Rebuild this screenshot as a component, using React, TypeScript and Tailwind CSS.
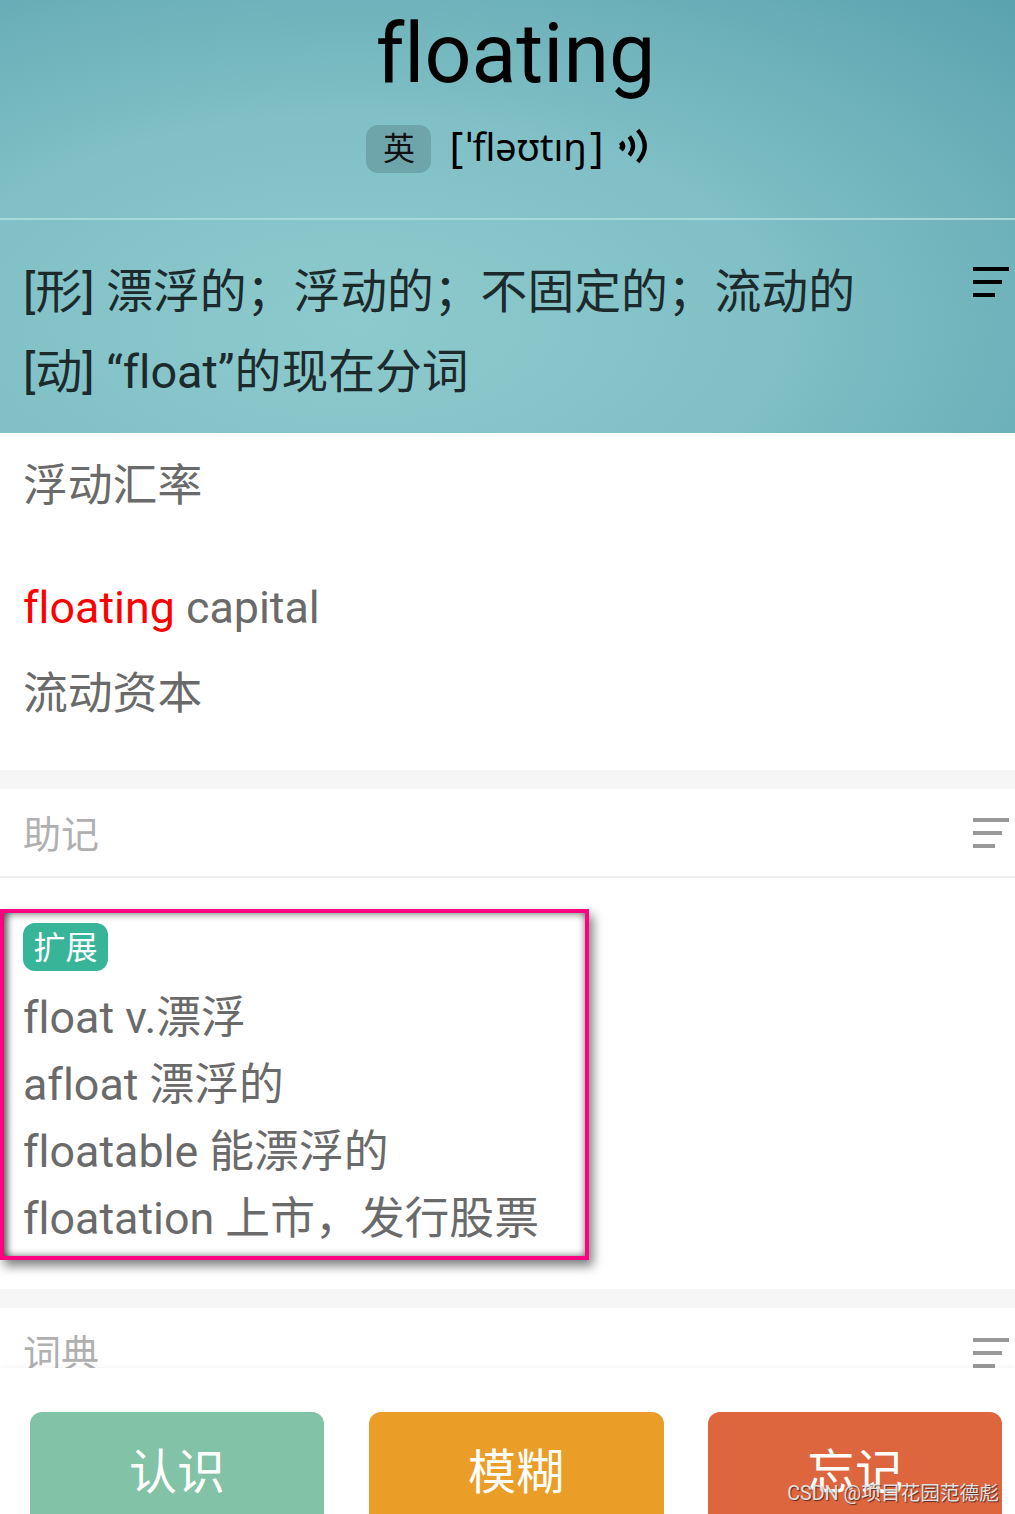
import React from "react";

function ListIcon({ className }: { className: string }) {
  return (
    <svg width="36" height="30" viewBox="0 0 36 30" className={className} fill="currentColor">
      <rect x="0" y="0" width="36" height="4" />
      <rect x="0" y="13" width="29" height="4" />
      <rect x="0" y="26" width="22" height="4" />
    </svg>
  );
}

function SoundIcon() {
  return (
    <svg width="30" height="38" viewBox="0 0 32 38" fill="none" stroke="black" strokeWidth="4.5">
      <path d="M2 15 Q6 19 2 23" strokeWidth="5.5" />
      <path d="M11 9 Q19 19 11 29" />
      <path d="M20 2 Q35 19 20 36" />
    </svg>
  );
}

export default function App() {
  return (
    <div className="relative flex h-[1514px] w-[1015px] flex-col overflow-hidden bg-white font-['Roboto','Noto_Sans_CJK_SC',sans-serif] [font-variant-ligatures:none]">
      <div className="min-h-0 flex-1 overflow-hidden">
        {/* Header */}
        <div className="flex h-[433px] flex-col bg-[#7fbfc5] bg-[radial-gradient(ellipse_at_35%_75%,#8dcacd_0%,#80c0c6_45%,#6cb0b9_75%,#5aa2af_100%)] text-black">
          <div className="flex h-[220px] flex-col items-center border-b-2 border-[#a9d8da]">
            <div className="ml-[16px] mt-[-3px] text-[82.5px] leading-[114px]">floating</div>
            <div className="mt-[11px] flex items-center">
              <span className="flex h-[48px] w-[65px] items-center justify-center rounded-[12px] bg-[#6ea5aa] text-[32px] leading-none text-[#111]">
                英
              </span>
              <span className="mb-[6px] ml-[18px] flex items-center font-['Noto_Sans',sans-serif] text-[38px] leading-[48px]">
                <span className="text-[42px]">[</span>
                <span className="ml-[3px]">ˈfləʊtıŋ</span>
                <span className="ml-[3px] text-[42px]">]</span>
              </span>
              <span className="mb-[6px] ml-[15px]">
                <SoundIcon />
              </span>
            </div>
          </div>
          <div className="relative flex flex-col pl-[23px] pt-[32px] text-[46.8px] leading-[80px] text-[#1c2a2c]">
            <div>[形] 漂浮的；浮动的；不固定的；流动的</div>
            <div>[动] “float”的现在分词</div>
            <ListIcon className="absolute right-[6px] top-[47px] text-black" />
          </div>
        </div>

        {/* Translations */}
        <div className="h-[337px] pl-[23px] pt-[17px] text-[44.8px] leading-[72px] text-[#6a6a6a]">
          <div>浮动汇率</div>
          <div className="mt-[50px]">
            <span className="text-[#fc0000]">floating</span> capital
          </div>
          <div className="mt-[14px]">流动资本</div>
        </div>

        {/* 助记 */}
        <div className="border-t-[19px] border-[#f6f6f6]">
          <div className="flex h-[89px] items-center justify-between border-b-2 border-[#eeeeee] pl-[23px] pr-[6px]">
            <span className="mt-[6px] text-[38px] text-[#b0b0b0]">助记</span>
            <ListIcon className="text-[#999]" />
          </div>
          <div className="h-[411px] pt-[31px]">
            <div className="h-[351px] w-[589px] border-4 border-[#ff0080] pl-[19px] pt-[10px] text-[#6a6a6a] shadow-[inset_8px_0_6px_-4px_rgba(0,0,0,0.55),inset_0_6px_6px_-3px_rgba(0,0,0,0.3),inset_0_-5px_6px_-3px_rgba(0,0,0,0.3),inset_-5px_0_6px_-3px_rgba(0,0,0,0.25),4px_6px_10px_rgba(0,0,0,0.5)]">
              <span className="flex h-[48px] w-[85px] items-center justify-center rounded-[12px] bg-[#38b598] pt-[2px] text-[32px] leading-none text-white">
                扩展
              </span>
              <div className="mt-[13px] text-[44.8px] leading-[67px]">
                <div>float v.漂浮</div>
                <div>afloat 漂浮的</div>
                <div>floatable 能漂浮的</div>
                <div>floatation 上市，发行股票</div>
              </div>
            </div>
          </div>
        </div>

        {/* 词典 */}
        <div className="border-t-[19px] border-[#f6f6f6]">
          <div className="flex h-[89px] items-center justify-between pl-[23px] pr-[6px]">
            <span className="mt-[4px] text-[38px] text-[#b0b0b0]">词典</span>
            <ListIcon className="text-[#999]" />
          </div>
        </div>
      </div>

      {/* Bottom buttons */}
      <div className="flex h-[146px] shrink-0 items-start justify-between bg-white pl-[30px] pr-[13px] pt-[44px] shadow-[0_-2px_4px_rgba(0,0,0,0.04)]">
        <button className="h-[120px] w-[294px] rounded-[12px] bg-[#82c2a7] pt-[2px] text-[48px] text-white">认识</button>
        <button className="h-[120px] w-[295px] rounded-[12px] bg-[#ea9e28] pt-[2px] text-[48px] text-white">模糊</button>
        <button className="h-[120px] w-[294px] rounded-[12px] bg-[#dd663f] pt-[2px] text-[48px] text-white">忘记</button>
      </div>

      <div className="absolute bottom-[6px] right-[16px] text-[19.7px] leading-[28px] text-[#e0e0e0] [text-shadow:1px_1px_1px_rgba(0,0,0,0.6)]">
        CSDN @项目花园范德彪
      </div>
    </div>
  );
}
